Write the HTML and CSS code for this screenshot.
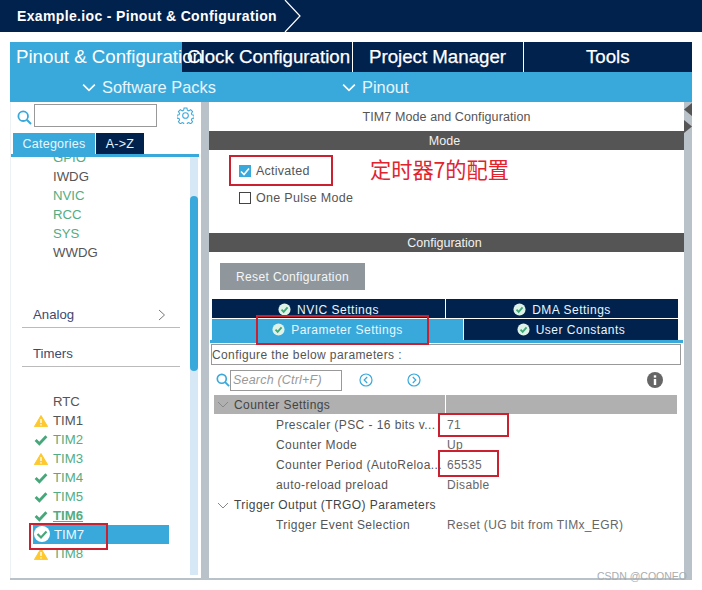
FILE: index.html
```html
<!DOCTYPE html>
<html lang="en">
<head>
<meta charset="utf-8">
<title>Pinout &amp; Configuration</title>
<link rel="stylesheet" href="styles.css">
</head>
<body>
<svg class="defs" width="0" height="0" aria-hidden="true">
  <symbol id="warn" viewBox="0 0 14 12"><path d="M7 .5 13.6 11.6H.4Z" fill="#fdc92f" stroke="#fdc92f" stroke-linejoin="round"/><path d="M7 4v4M7 9.2v1.2" stroke="#fff" stroke-width="1.4"/></symbol>
  <symbol id="check" viewBox="0 0 13 11"><path d="M1.5 5.5 5 9l6.5-7" fill="none" stroke="#46a77a" stroke-width="2.6"/></symbol>
  <symbol id="okdot" viewBox="0 0 14 14"><circle cx="7" cy="7" r="6.5" fill="#dff2e8"/><path d="M3.8 7.2 6.1 9.5 10.3 4.8" fill="none" stroke="#3fa877" stroke-width="2"/></symbol>
  <symbol id="lens" viewBox="0 0 15 15"><circle cx="6.2" cy="6.2" r="4.8" fill="none" stroke="#39a9dc" stroke-width="1.8"/><path d="M9.8 9.8 14 14" stroke="#39a9dc" stroke-width="2"/></symbol>
  <symbol id="down" viewBox="0 0 12 7"><path d="M1 1l5 5 5-5" fill="none" stroke="currentColor" stroke-width="1"/></symbol>
</svg>

<header class="topbar">
  <span class="crumb">Example.ioc - Pinout &amp; Configuration</span>
  <svg class="crumb-arrow" width="18" height="32" viewBox="0 0 18 32"><path d="M1 0 16 16 1 32" fill="none" stroke="#fff" stroke-width="1.2"/></svg>
</header>

<div class="shell">
  <nav class="tabs">
    <div class="tab tab-active">Pinout &amp; Configuration</div>
    <div class="tab tab-clock">Clock Configuration</div>
    <div class="tab tab-project">Project Manager</div>
    <div class="tab tab-tools">Tools</div>
  </nav>
  <div class="subbar">
    <div class="sub sub-packs"><svg class="sub-icon" width="14" height="9" viewBox="0 0 12 7"><path d="M1 1l5 5 5-5" fill="none" stroke="#fff" stroke-width="1.4"/></svg>Software Packs</div>
    <div class="sub sub-pinout"><svg class="sub-icon" width="14" height="9" viewBox="0 0 12 7"><path d="M1 1l5 5 5-5" fill="none" stroke="#fff" stroke-width="1.4"/></svg>Pinout</div>
  </div>

  <main class="main">
    <aside class="left">
      <div class="searchrow">
        <svg class="lens" width="15" height="15"><use href="#lens"/></svg>
        <div class="searchbox"></div>
        <svg class="gear" width="17" height="17" viewBox="0 0 24 24"><path d="M10 1.5h4l.6 3 2 .9 2.6-1.700 2.800 2.800-1.700 2.600.9 2 3 .6v4l-3 .6-.9 2 1.700 2.600-2.800 2.800-2.600-1.700-2 .9-.6 3h-4l-.6-3-2-.9-2.600 1.700-2.800-2.800 1.700-2.600-.9-2-3-.6v-4l3-.6.9-2-1.700-2.600 2.800-2.800 2.600 1.700 2-.9Z" fill="none" stroke="#39a9dc" stroke-width="1.500"/><circle cx="12" cy="12" r="4" fill="none" stroke="#39a9dc" stroke-width="1.500"/></svg>
      </div>
      <div class="cat-tabs">
        <div class="cat cat-on">Categories</div>
        <div class="cat cat-off">A-&gt;Z</div>
      </div>
      <div class="listwrap">
        <div class="list">
          <div class="item item-first green">GPIO</div>
          <div class="item">IWDG</div>
          <div class="item green">NVIC</div>
          <div class="item green">RCC</div>
          <div class="item green">SYS</div>
          <div class="item">WWDG</div>
          <div class="group group-analog"><span>Analog</span><svg width="8" height="12" viewBox="0 0 8 12"><path d="M1 1l5.500 5L1 11" fill="none" stroke="#777" stroke-width="1"/></svg></div>
          <div class="group group-timers"><span>Timers</span></div>
          <div class="item item-rtc">RTC</div>
          <div class="item"><svg class="st st-w"><use href="#warn"/></svg>TIM1</div>
          <div class="item green"><svg class="st st-c"><use href="#check"/></svg>TIM2</div>
          <div class="item green"><svg class="st st-w"><use href="#warn"/></svg>TIM3</div>
          <div class="item green"><svg class="st st-c"><use href="#check"/></svg>TIM4</div>
          <div class="item green"><svg class="st st-c"><use href="#check"/></svg>TIM5</div>
          <div class="item green item-bold"><svg class="st st-c"><use href="#check"/></svg><u>TIM6</u></div>
          <div class="item item-sel"><svg class="st-sel" width="16" height="16" viewBox="0 0 16 16"><circle cx="8" cy="8" r="8" fill="#fff"/><path d="M3.500 8 7 11.500l5.500-6" fill="none" stroke="#46a77a" stroke-width="2.200"/></svg>TIM7</div>
          <div class="item green"><svg class="st st-w"><use href="#warn"/></svg>TIM8</div>
        </div>
        <div class="scroll"><div class="thumb"></div></div>
      </div>
    </aside>

    <div class="gutter"></div>

    <section class="right">
      <div class="panel-title">TIM7 Mode and Configuration</div>
      <div class="band">Mode</div>
      <div class="mode">
        <label class="opt opt-on"><span class="box box-on"><svg width="10" height="9" viewBox="0 0 10 9"><path d="M1 4.500 4 7.500 9 1.500" fill="none" stroke="#fff" stroke-width="1.600"/></svg></span>Activated</label>
        <label class="opt opt-off"><span class="box"></span>One Pulse Mode</label>
      </div>
      <div class="band">Configuration</div>
      <div class="config">
        <div class="reset">Reset Configuration</div>
        <div class="ptabs ptabs-top">
          <div class="ptab ptab-a"><svg class="dot" width="13" height="13"><use href="#okdot"/></svg>NVIC Settings</div>
          <div class="ptab ptab-b"><svg class="dot" width="13" height="13"><use href="#okdot"/></svg>DMA Settings</div>
        </div>
        <div class="ptabs ptabs-bottom">
          <div class="ptab ptab-c"><svg class="dot" width="13" height="13"><use href="#okdot"/></svg>Parameter Settings</div>
          <div class="ptab ptab-d"><svg class="dot" width="13" height="13"><use href="#okdot"/></svg>User Constants</div>
        </div>
        <div class="pline"></div>
        <div class="hint">Configure the below parameters :</div>
        <div class="tools">
          <svg class="lens2" width="14" height="14"><use href="#lens"/></svg>
          <div class="psearch">Search (Ctrl+F)</div>
          <svg class="nav nav-prev" width="14" height="14" viewBox="0 0 14 14"><circle cx="7" cy="7" r="6" fill="none" stroke="#39a9dc" stroke-width="1.200"/><path d="M8.200 4 5.200 7l3 3" fill="none" stroke="#39a9dc" stroke-width="1.200"/></svg>
          <svg class="nav nav-next" width="14" height="14" viewBox="0 0 14 14"><circle cx="7" cy="7" r="6" fill="none" stroke="#39a9dc" stroke-width="1.200"/><path d="M5.800 4l3 3-3 3" fill="none" stroke="#39a9dc" stroke-width="1.200"/></svg>
          <svg class="info" width="16" height="16" viewBox="0 0 16 16"><circle cx="8" cy="8" r="8" fill="#666"/><rect x="6.800" y="7" width="2.400" height="6" fill="#fff"/><rect x="6.800" y="3.300" width="2.400" height="2.300" fill="#fff"/></svg>
        </div>
        <div class="ptable">
          <div class="phead"><svg class="exp" width="12" height="7"><use href="#down"/></svg><span class="phead-l">Counter Settings</span><span class="phead-r"></span></div>
          <div class="prow"><span class="pk">Prescaler (PSC - 16 bits v...</span><span class="pv">71</span></div>
          <div class="prow"><span class="pk">Counter Mode</span><span class="pv">Up</span></div>
          <div class="prow"><span class="pk">Counter Period (AutoReloa...</span><span class="pv">65535</span></div>
          <div class="prow"><span class="pk">auto-reload preload</span><span class="pv">Disable</span></div>
          <div class="phead phead-plain"><svg class="exp" width="12" height="7"><use href="#down"/></svg><span>Trigger Output (TRGO) Parameters</span></div>
          <div class="prow"><span class="pk">Trigger Event Selection</span><span class="pv">Reset (UG bit from TIMx_EGR)</span></div>
        </div>
      </div>
    </section>

    <div class="gutter gutter-r">
      <svg class="split" width="8" height="31" viewBox="0 0 8 31"><path d="M8 1v13L0 7.500ZM0 18v13l8-6.500Z" fill="#555"/></svg>
    </div>
  </main>
</div>

<div class="mark mark-activated"></div>
<div class="mark mark-param"></div>
<div class="mark mark-71"></div>
<div class="mark mark-65535"></div>
<div class="mark mark-tim7"></div>
<div class="note">定时器7的配置</div>
<div class="watermark">CSDN @COONEO</div>
</body>
</html>
```
FILE: styles.css
```css
* { box-sizing: border-box; }
html, body { margin: 0; padding: 0; }
body {
  width: 702px;
  height: 590px;
  position: relative;
  overflow: hidden;
  background: #fff;
  font-family: "Liberation Sans", Arial, sans-serif;
  font-size: 13px;
  color: #555;
}
.defs { position: absolute; }

.topbar {
  height: 32px;
  background: #02224e;
  display: flex;
  align-items: center;
  padding-left: 17px;
  color: #fff;
}
.crumb { font-size: 14px; font-weight: bold; letter-spacing: 0.35px; white-space: nowrap; }
.crumb-arrow { margin-left: 7px; flex: none; }

.shell { margin: 10px 10px 0; width: 682px; }
.tabs { display: flex; height: 30px; background: #02224e; }
.tab {
  display: flex;
  align-items: center;
  justify-content: center;
  font-size: 18.700px;
  color: #fff;
  white-space: nowrap;
  border-left: 1px solid #fff;
}
.tab-active {
  width: 172px;
  background: #39a9dc;
  border-left: 0;
  justify-content: flex-start;
  padding-left: 6px;
  position: relative;
  z-index: 1;
}
.tab-clock { width: 169.500px; background: #02224e; border-left: 0; padding-left: 5px; justify-content: flex-start; -webkit-text-stroke: .25px #fff; }
.tab-project { width: 171px; border-left: 1.500px solid #fff; -webkit-text-stroke: .25px #fff; }
.tab-tools { flex: 1; -webkit-text-stroke: .25px #fff; }

.subbar { height: 30px; background: #39a9dc; display: flex; color: #fff; font-size: 16.400px; }
.sub { display: flex; align-items: center; color: #e8f6fc; }
.sub-packs { padding-left: 72px; width: 332px; }
.sub-icon { margin-right: 6px; }

.main { display: flex; height: 478px; border-bottom: 2px solid #b9c2c8; }
.left { width: 191px; display: flex; flex-direction: column; border-left: 1px solid #eef1f3; }
.gutter { width: 8px; background: #b9c2c8; flex: none; }
.right { width: 475px; display: flex; flex-direction: column; }

.searchrow { height: 31px; display: flex; align-items: flex-start; padding-left: 6px; padding-top: 2px; }
.lens { flex: none; margin-top: 6px; }
.searchbox { width: 123px; height: 23px; margin-left: 2px; border: 1px solid #999; background: #fff; }
.gear { margin: 3px 0 0 20px; flex: none; }

.cat-tabs { display: flex; height: 21px; margin-left: 2px; gap: 1px; }
.cat { display: flex; align-items: center; justify-content: center; letter-spacing: .25px; font-size: 12.500px; }
.cat-on { width: 82px; background: #39a9dc; color: #e8f6fc; }
.cat-off { width: 48px; background: #02224e; color: #e8f6fc; }

.listwrap {
  flex: 1;
  min-height: 0;
  display: flex;
  border-top: 3px solid #39a9dc;
  margin-right: 2px;
  padding-bottom: 3px;
  overflow: hidden;
}
.list { width: 179px; overflow: hidden; }
.item {
  height: 19px;
  line-height: 19px;
  padding-left: 42px;
  position: relative;
  color: #555;
  font-size: 13.200px;
  white-space: nowrap;
}
.item-first { margin-top: -9px; }
.green { color: #53ad82; }
.item-bold { font-weight: bold; }
.st { position: absolute; left: 23px; top: 4px; width: 14px; height: 12px; }
.st-sel { position: absolute; left: 23px; top: 1px; }
.item-sel {
  margin-left: 22px;
  padding-left: 21px;
  width: 136px;
  background: #39a9dc;
  color: #eaf7fd;
}
.item-sel .st-sel { left: 1px; }
.group {
  margin: 0 10px 0 11px;
  height: 26px;
  border-bottom: 1px solid #bbb;
  display: flex;
  align-items: center;
  justify-content: space-between;
  padding: 0 14px 0 11px;
  color: #3c4a70;
  font-size: 13.200px;
}
.group-analog { margin-top: 40px; }
.group-timers { margin-top: 13px; }
.item-rtc { margin-top: 25px; }
.scroll { width: 8px; background: #d6e7f5; position: relative; }
.thumb { margin-top: 39px; height: 175px; background: #39a9dc; border-radius: 4px; }

.panel-title { height: 29px; display: flex; align-items: center; justify-content: center; letter-spacing: .1px; font-size: 12.500px; }
.band {
  height: 19px;
  flex: none;
  background: #555;
  color: #f2f2f2;
  display: flex;
  align-items: center;
  justify-content: center;
  font-size: 12.500px;
  padding-right: 4px;
}
.mode { height: 83px; padding: 14px 0 0 30px; display: flex; flex-direction: column; }
.opt { display: flex; align-items: center; height: 14px; letter-spacing: .25px; font-size: 12.500px; }
.opt-off { margin-top: 13px; letter-spacing: .3px; }
.box { width: 12px; height: 12px; border: 1px solid #444; margin-right: 5px; display: flex; align-items: center; justify-content: center; background: #fff; }
.box-on { background: #39a9dc; border-color: #39a9dc; }

.config { flex: 1; min-height: 0; display: flex; flex-direction: column; padding: 11px 0 0 3px; }
.reset {
  margin-left: 8px;
  width: 145px;
  height: 27px;
  background: #8f979d;
  color: #f4f6f7;
  display: flex;
  align-items: center;
  justify-content: center;
  letter-spacing: .36px;
  font-size: 12px;
}
.ptabs { display: flex; width: 466px; color: #e8f6fc; letter-spacing: .5px; font-size: 12px; }
.ptabs-top { margin-top: 9px; height: 19px; overflow: hidden; }
.ptabs-top .ptab { padding-top: 2px; }
.ptabs-bottom { margin-top: 1px; height: 21px; }
.ptab { display: flex; align-items: center; justify-content: center; background: #02224e; }
.ptab-a { width: 234px; border-right: 1px solid #fff; }
.ptab-b { flex: 1; }
.ptab-c { width: 251px; background: #39a9dc; }
.ptab-d { flex: 1; border-left: 1px solid #fff; }
.dot { margin-right: 6px; flex: none; }
.pline { height: 3px; background: #39a9dc; width: 473px; margin-left: -2px; flex: none; }
.hint {
  margin: 1px 0 0 -1px;
  width: 470px;
  height: 21px;
  border: 1px solid #999;
  display: flex;
  align-items: center;
  letter-spacing: .39px;
  font-size: 12px;
  flex: none;
}
.tools { height: 30px; display: flex; align-items: center; padding-left: 4px; flex: none; }
.lens2 { flex: none; }
.psearch {
  width: 112px;
  height: 21px;
  border: 1px solid #999;
  color: #999;
  font-style: italic;
  font-size: 12.500px;
  display: flex;
  align-items: center;
  padding-left: 2px;
  letter-spacing: .2px;
}
.nav-prev { margin-left: 17px; }
.nav-next { margin-left: 34px; }
.info { margin-left: 226px; }
.ptable { width: 463px; margin-left: 2px; color: #555; letter-spacing: .43px; font-size: 12px; }
.phead { height: 19px; display: flex; align-items: center; color: #444; }
.phead:not(.phead-plain) { background: #b0b0b0; margin-bottom: 1px; }
.phead-plain { height: 20px; }
.phead-l { flex: 1; }
.phead-r { width: 232px; border-left: 1px solid #fff; align-self: stretch; }
.exp { margin: 0 5px 0 3px; color: #888; flex: none; }
.prow { height: 20px; display: flex; align-items: center; white-space: nowrap; }
.pk { width: 233px; padding-left: 62px; overflow: hidden; }
.pv { color: #666; letter-spacing: .35px; }

.mark { position: absolute; border: 2px solid #cb2030; pointer-events: none; }
.mark-activated { left: 229px; top: 155px; width: 104px; height: 31px; }
.mark-param { left: 256px; top: 315px; width: 173px; height: 30px; }
.mark-71 { left: 438px; top: 413px; width: 71px; height: 24px; }
.mark-65535 { left: 438px; top: 450px; width: 61px; height: 27px; }
.mark-tim7 { left: 29px; top: 523px; width: 79px; height: 27px; }
.note {
  position: absolute;
  left: 370px;
  top: 156px;
  font-family: "Noto Sans CJK SC", sans-serif;
  font-size: 21.200px;
  line-height: 26px;
  color: #e0242e;
  white-space: nowrap;
}
.watermark {
  position: absolute;
  left: 597px;
  top: 570px;
  font-size: 10.500px;
  line-height: 13px;
  color: #a9adb0;
  white-space: nowrap;
}
```
